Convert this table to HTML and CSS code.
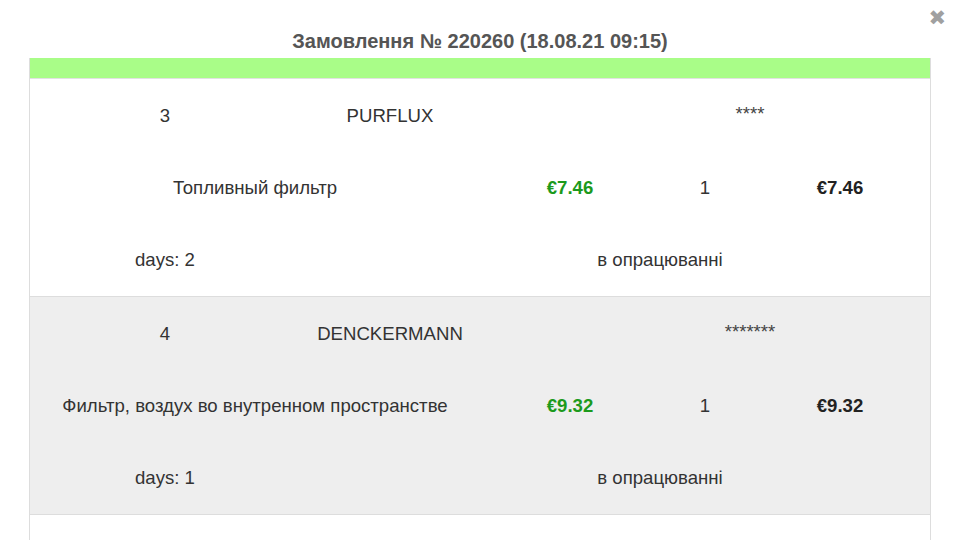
FILE: index.html
```html
<!DOCTYPE html>
<html lang="uk">
<head>
<meta charset="utf-8">
<title>Замовлення № 220260</title>
<link rel="stylesheet" href="styles.css">
</head>
<body>
<div class="modal">
  <button class="close" aria-label="close">&#10006;</button>
  <h1 class="title">Замовлення № 220260 (18.08.21 09:15)</h1>
  <div class="order">
    <div class="bar"></div>
    <div class="item">
      <div class="line">
        <span class="c-a">3</span>
        <span class="c-b">PURFLUX</span>
        <span class="c-code">****</span>
      </div>
      <div class="line">
        <span class="c-desc">Топливный фильтр</span>
        <span class="c-price">€7.46</span>
        <span class="c-qty">1</span>
        <span class="c-total">€7.46</span>
      </div>
      <div class="line">
        <span class="c-a">days: 2</span>
        <span class="c-status">в опрацюванні</span>
      </div>
    </div>
    <div class="item alt">
      <div class="line">
        <span class="c-a">4</span>
        <span class="c-b">DENCKERMANN</span>
        <span class="c-code">*******</span>
      </div>
      <div class="line">
        <span class="c-desc">Фильтр, воздух во внутренном пространстве</span>
        <span class="c-price">€9.32</span>
        <span class="c-qty">1</span>
        <span class="c-total">€9.32</span>
      </div>
      <div class="line">
        <span class="c-a">days: 1</span>
        <span class="c-status">в опрацюванні</span>
      </div>
    </div>
    <div class="item"></div>
  </div>
</div>
</body>
</html>
```

FILE: styles.css
```css
html, body {
  margin: 0;
  padding: 0;
  background: #ffffff;
  height: 540px;
  overflow: hidden;
  font-family: "Liberation Sans", Arial, sans-serif;
  color: #333333;
}

.modal {
  position: relative;
  padding-top: 30px;
}

.close {
  position: absolute;
  top: 7px;
  right: 14px;
  border: 0;
  background: none;
  padding: 0;
  font-size: 21px;
  line-height: 22px;
  color: #a0a0a0;
  font-family: "DejaVu Sans", sans-serif;
  font-weight: bold;
  cursor: pointer;
}

.title {
  margin: 0 0 6px;
  text-align: center;
  font-size: 20px;
  line-height: 22px;
  font-weight: bold;
  color: #555555;
}

.order {
  margin: 0 29px;
  border-left: 1px solid #dddddd;
  border-right: 1px solid #dddddd;
}

.bar {
  height: 20px;
  background: #a9fd88;
  border-bottom: 1px solid #e2e2e2;
}

.item {
  border-bottom: 1px solid #dddddd;
  background: #ffffff;
  min-height: 216px;
  padding-top: 1px;
}

.item.alt {
  background: #eeeeee;
}

.line {
  display: grid;
  grid-template-columns: repeat(10, 1fr);
  height: 72px;
  align-items: center;
  text-align: center;
  font-size: 18.6px;
}

.c-a { grid-column: 1 / 4; }
.c-b { grid-column: 4 / 6; }
.c-code { grid-column: 7 / 11; color: #444444; margin-top: -4px; }
.c-desc { grid-column: 1 / 6; }
.c-price { grid-column: 6 / 8; color: #1c9a1c; font-weight: bold; }
.c-qty { grid-column: 8 / 9; }
.c-total { grid-column: 9 / 11; font-weight: bold; color: #222222; }
.c-status { grid-column: 6 / 10; }
```
